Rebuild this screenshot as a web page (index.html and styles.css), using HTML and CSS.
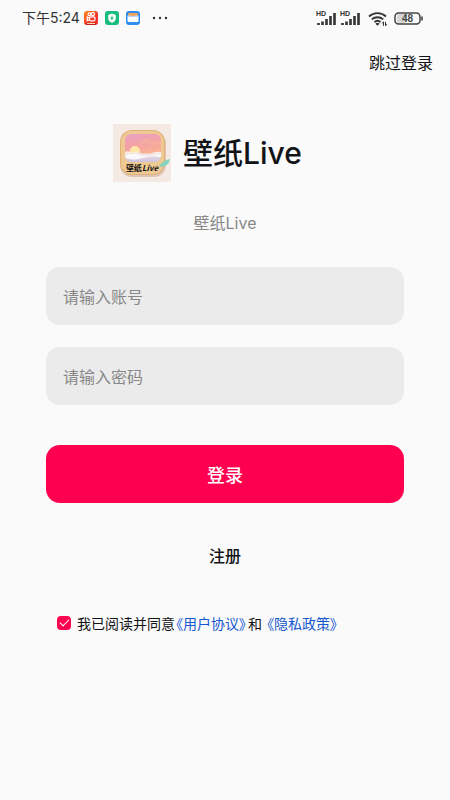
FILE: index.html
```html
<!DOCTYPE html>
<html lang="zh-CN">
<head>
<meta charset="utf-8">
<meta name="viewport" content="width=device-width, initial-scale=1">
<title>壁纸Live</title>
<link rel="stylesheet" href="styles.css">
</head>
<body>
<div class="status">
  <div class="status-left">
    <span class="clock">下午5:24</span>
    <svg class="app" viewBox="0 0 14 14" aria-hidden="true">
      <defs><linearGradient id="hot" x1="0" y1="0" x2="1" y2="1"><stop offset="0" stop-color="#ff8a1c"/><stop offset=".6" stop-color="#f5352b"/></linearGradient></defs>
      <rect width="14" height="14" rx="3" fill="url(#hot)"/>
      <g fill="none" stroke="#fff" stroke-width="1.2"><circle cx="5.4" cy="3.2" r="1.4"/><circle cx="8.9" cy="3" r="1.6"/><rect x="5.6" y="5.8" width="5.4" height="4" rx="1.2"/><path d="M5.6 7 3.2 6v3.6l2.400-1"/></g>
      <path d="M1 12h12a3 3 0 0 1-2.500 2h-7A3 3 0 0 1 1 12z" fill="#c81f22"/>
      <path d="M3 12.500h8" stroke="#ffd9a8" stroke-width="1"/>
    </svg>
    <svg class="app" viewBox="0 0 14 14" aria-hidden="true">
      <rect width="14" height="14" rx="3" fill="#18bd7b"/>
      <path d="M7 2.500 10.800 4v3.200c0 2.200-1.500 3.600-3.800 4.500-2.300-.9-3.800-2.300-3.800-4.500V4z" fill="#fff"/>
      <path d="M7.500 4.500 5 7.600h1.600L6.300 9.800 9 6.600H7.300z" fill="#18bd7b"/>
    </svg>
    <svg class="app" viewBox="0 0 14 14" aria-hidden="true">
      <rect width="14" height="14" rx="3" fill="#2f8cf0"/>
      <rect x="2" y="2" width="10" height="3" rx="1" fill="#f0a35e"/>
      <path d="M1.500 5.500h11v4.500a1 1 0 0 1-1 1h-9a1 1 0 0 1-1-1z" fill="#fff"/>
      <path d="M1.500 4.500h3.500c.5 1.600 3.500 1.600 4 0h3.500v1.500h-11z" fill="#b9d9fb"/>
    </svg>
    <svg class="more" viewBox="0 0 16 4" aria-hidden="true"><g fill="#333"><circle cx="2" cy="2" r="1.200"/><circle cx="8" cy="2" r="1.200"/><circle cx="14" cy="2" r="1.200"/></g></svg>
  </div>
  <div class="status-right">
    <div class="signal"><span class="hd">HD</span>
      <svg viewBox="0 0 20 13" aria-hidden="true"><path d="M1.500 11v2M5.500 9.500V13M9.500 7V13M13.500 4V13M17.500 1V13" stroke="#333" stroke-width="2.600" fill="none"/></svg></div>
    <div class="signal"><span class="hd">HD</span>
      <svg viewBox="0 0 20 13" aria-hidden="true"><path d="M1.500 11v2M5.500 9.500V13M9.500 7V13M13.500 4V13M17.500 1V13" stroke="#333" stroke-width="2.600" fill="none"/></svg></div>
    <svg class="wifi" viewBox="0 0 20 15" aria-hidden="true">
      <g fill="none" stroke="#333" stroke-width="1.900"><path d="M1 5.500a12.500 12.500 0 0 1 17 0M3.800 8.400a8.500 8.500 0 0 1 11.400 0M6.400 11a4.800 4.800 0 0 1 6.200 0"/></g>
      <path d="M7.400 12.700a3.200 3.200 0 0 1 4.200 0L9.500 14.800z" fill="#333"/>
      <path d="M15.500 14.800v-4l-1.400 1.600M17.500 10.800v4l1.400-1.600" stroke="#333" stroke-width="1" fill="none"/>
    </svg>
    <svg class="battery" viewBox="0 0 29 13" aria-hidden="true">
      <rect x="3" y="2" width="9" height="9" rx="2" fill="#d5d5d5"/>
      <rect x="1" y="1" width="25" height="11" rx="3.500" fill="none" stroke="#444" stroke-width="1.500"/>
      <path d="M28 4.500v4" stroke="#444" stroke-width="1.600"/>
      <text x="13.500" y="10" text-anchor="middle">48</text>
    </svg>
  </div>
</div>
<header class="topbar"><a class="skip" href="#skip">跳过登录</a></header>
<main class="login">
  <div class="brand">
    <svg class="logo" viewBox="0 0 58 58" role="img" aria-label="壁纸Live">
      <defs>
        <linearGradient id="sky" x1="0" y1="0" x2=".3" y2="1"><stop offset="0" stop-color="#e9a0c4"/><stop offset=".45" stop-color="#f4a2a5"/><stop offset="1" stop-color="#fbb98a"/></linearGradient>
        <linearGradient id="sea" x1="0" y1="0" x2="0" y2="1"><stop offset="0" stop-color="#fff1e4"/><stop offset="1" stop-color="#c3b9dc"/></linearGradient>
        <clipPath id="pane"><rect x="12" y="10" width="36" height="28" rx="6"/></clipPath>
      </defs>
      <rect width="58" height="58" fill="#f4e9e3"/>
      <rect x="7" y="8" width="46" height="45" rx="12" fill="#dfc3b4"/>
      <rect x="7" y="6" width="45" height="45" rx="12" fill="#e0b27a"/>
      <rect x="8" y="7" width="43" height="43" rx="11" fill="#efc993"/>
      <g clip-path="url(#pane)">
        <rect x="12" y="10" width="36" height="28" fill="url(#sky)"/>
        <path d="M28 16q6-3 10 0t10 0v4q-7 2-12 0t-12 1z" fill="#f7b09c" opacity=".6"/>
        <circle cx="22" cy="27" r="5" fill="#ffe6a6"/>
        <path d="M12 28q4-2 7 1 4-3 8 0 8 1 12 0 5-2 9-1v12H12z" fill="url(#sea)"/>
        <path d="M12 31q8-2 15 0t21-1v3q-10-2-18 1t-18 0z" fill="#fff" opacity=".8"/>
      </g>
      <path d="M46 43q2-6 11-8-1 8-11 8z" fill="#84d3bc"/>
      <text class="logo-text" x="29" y="47" text-anchor="middle">壁纸<tspan font-style="italic">Live</tspan></text>
    </svg>
    <h1>壁纸Live</h1>
  </div>
  <p class="subtitle">壁纸Live</p>
  <form>
    <input class="field" type="text" aria-label="账号" placeholder="请输入账号">
    <input class="field" type="password" aria-label="密码" placeholder="请输入密码">
    <button class="submit" type="submit">登录</button>
    <a class="register" href="#register">注册</a>
    <div class="agree">
      <input id="agree" type="checkbox" checked>
      <label for="agree">我已阅读并同意</label><a href="#terms">《用户协议》</a><span>和</span><a class="privacy" href="#privacy">《隐私政策》</a>
    </div>
  </form>
</main>
</body>
</html>
```
FILE: styles.css
```css
* { box-sizing: border-box; }
body {
  margin: 0;
  background: #fafafa;
  color: #111317;
  font-family: "Noto Sans CJK SC", sans-serif;
  font-size: 16px;
  line-height: 24px;
}
a { color: inherit; text-decoration: none; }
svg { display: block; flex: none; }

.status {
  display: flex;
  justify-content: space-between;
  align-items: center;
  height: 36px;
  padding: 0 27px 0 22px;
  color: #333;
}
.status-left, .status-right { display: flex; align-items: center; }
.status-left { gap: 7px; }
.clock { font-size: 14px; margin-right: -3px; }
.clock, h1, .subtitle { font-family: Inter, "Noto Sans CJK SC", sans-serif; }
.app { width: 14px; height: 14px; }
.more { width: 16px; height: 4px; margin-left: 5px; }
.status-right { gap: 4px; }
.signal { position: relative; }
.signal svg { width: 20px; height: 13px; }
.hd {
  position: absolute;
  left: -1px;
  top: -2px;
  font: 700 7px/8px "Liberation Sans", sans-serif;
}
.wifi { width: 20px; height: 15px; margin-left: 3px; }
.battery { width: 29px; height: 13px; margin-left: 2px; }
.battery text { font: 700 10px "Liberation Sans", sans-serif; fill: #444; }

.topbar { display: flex; justify-content: flex-end; padding: 14px 17px 0; }

.login { padding: 50px 46px 0; }
.brand {
  display: flex;
  justify-content: center;
  align-items: center;
  gap: 12px;
  margin-right: 35px;
}
.logo { width: 58px; height: 58px; }
.logo-text { font: 700 8px "Noto Sans CJK SC", sans-serif; fill: #111; }
h1 { margin: 0; font-size: 30px; line-height: 44px; font-weight: 500; white-space: nowrap; }
.subtitle { margin: 29px 0 32px; text-align: center; color: #888; }

form { display: flex; flex-direction: column; }
.field {
  width: 100%;
  height: 58px;
  margin: 0 0 22px;
  padding: 0 17px;
  border: 0;
  border-radius: 14px;
  background: #ebebeb;
  color: #111317;
  font: inherit;
}
.field::placeholder { color: #888; opacity: 1; }
.submit {
  height: 58px;
  margin-top: 18px;
  border: 0;
  border-radius: 14px;
  background: #ff0050;
  color: #fff;
  font: inherit;
  font-size: 18px;
  font-weight: 500;
}
.register { align-self: center; margin-top: 40px; font-weight: 500; }
.agree {
  display: flex;
  align-items: center;
  margin: 44px 0 0 11px;
  font-size: 14px;
  white-space: nowrap;
}
.agree input {
  appearance: none;
  width: 14px;
  height: 14px;
  margin: 0 6px 0 0;
  border-radius: 4px;
  background: #ff0050;
  display: grid;
  place-items: center;
}
.agree input:checked::before {
  content: "";
  width: 8px;
  height: 4px;
  margin-bottom: 3px;
  border: solid #fff;
  border-width: 0 0 1px 1px;
  transform: rotate(-45deg);
}
.agree a { padding: 0 2px 0 1px; color: #1557d0; font-feature-settings: "palt"; }
.agree .privacy { margin-left: 4px; }
```
